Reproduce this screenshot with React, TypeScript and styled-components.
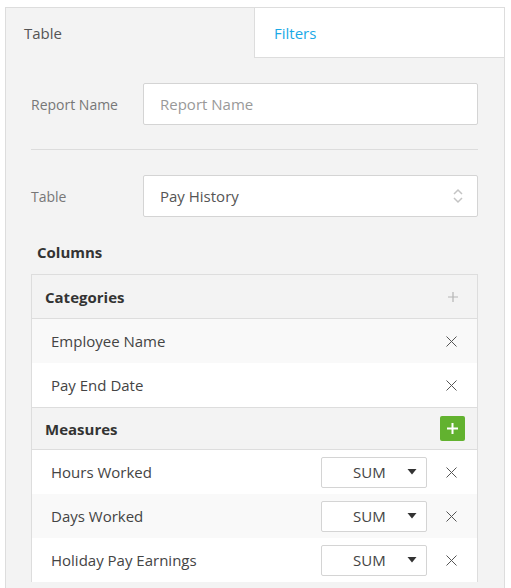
import React from "react";
import styled, { createGlobalStyle } from "styled-components";

const Global = createGlobalStyle`
  html, body { margin: 0; padding: 0; background: #ffffff; }
  body { font-family: "Open Sans", "Noto Sans", sans-serif; font-size: 14px; color: #444; }
  * { box-sizing: border-box; }
`;

const Frame = styled.div`
  margin: 7px 0 0 5px;
  width: 500px;
  height: 581px;
  background: #f3f3f3;
  border: 1px solid #dddddd;
  border-bottom: none;
  overflow: hidden;
`;

const Tabs = styled.div`
  display: flex;
  height: 50px;
`;

const Tab = styled.div<{ $active?: boolean }>`
  flex: 1;
  display: flex;
  align-items: center;
  padding-left: ${(p) => (p.$active ? "18px" : "19px")};
  font-size: 15px;
  color: ${(p) => (p.$active ? "#555" : "#1aa9e6")};
  background: ${(p) => (p.$active ? "transparent" : "#ffffff")};
  border-left: ${(p) => (p.$active ? "none" : "1px solid #dddddd")};
  border-bottom: ${(p) => (p.$active ? "none" : "1px solid #dddddd")};
`;

const Body = styled.div`
  padding: 25px 26px 0 25px;
`;

const FieldRow = styled.div`
  display: flex;
  align-items: center;
`;

const Label = styled.div`
  width: 112px;
  font-size: 14px;
  color: #777;
`;

const TextInput = styled.div`
  flex: 1;
  height: 42px;
  background: #fff;
  border: 1px solid #d4d4d4;
  border-radius: 2px;
  display: flex;
  align-items: center;
  padding-left: 16px;
  font-size: 15px;
  color: #999;
`;

const SelectBox = styled(TextInput)`
  color: #555;
  justify-content: space-between;
  padding-right: 14px;
`;

const Divider = styled.div`
  height: 1px;
  background: #dcdcdc;
  margin: 24px 0 25px;
`;

const SectionTitle = styled.div`
  font-weight: 700;
  font-size: 15px;
  color: #333;
  margin: 25px 0 12px 6px;
`;

const Panel = styled.div`
  border: 1px solid #dddddd;
  border-bottom: none;
  background: #fff;
`;

const PanelHeader = styled.div<{ $top?: boolean }>`
  height: ${(p) => (p.$top ? "44px" : "43px")};
  background: #f3f3f3;
  display: flex;
  align-items: center;
  justify-content: space-between;
  padding: 0 12px 0 13px;
  font-weight: 700;
  font-size: 15px;
  color: #333;
  border-bottom: 1px solid #dddddd;
  ${(p) => (p.$top ? "" : "border-top: 1px solid #dddddd;")}
`;

const Item = styled.div<{ $shade?: boolean }>`
  height: 44px;
  display: flex;
  align-items: center;
  padding: 0 19px 0 19px;
  background: ${(p) => (p.$shade ? "#f9f9f9" : "#ffffff")};
  font-size: 15px;
  color: #444;
`;

const ItemName = styled.div`
  flex: 1;
`;

const Agg = styled.div`
  width: 106px;
  height: 31px;
  border: 1px solid #d4d4d4;
  border-radius: 2px;
  background: #fff;
  display: flex;
  align-items: center;
  justify-content: space-between;
  padding: 0 9px 0 31px;
  margin-right: 17px;
  font-size: 15px;
  color: #444;
`;

const AddGreen = styled.div`
  width: 25px;
  height: 25px;
  border-radius: 2px;
  background: #62b22f;
  display: flex;
  align-items: center;
  justify-content: center;
`;

const IconBox = styled.div<{ $shift?: number }>`
  display: flex;
  align-items: center;
  justify-content: center;
  width: 14px;
  height: 14px;
  margin-right: ${(p) => p.$shift ?? 0}px;
`;

const Close = () => (
  <IconBox>
    <svg width="11" height="11" viewBox="0 0 11 11">
      <path d="M0.5 0.5 L10.5 10.5 M10.5 0.5 L0.5 10.5" stroke="#555" strokeWidth="1" fill="none" />
    </svg>
  </IconBox>
);

const Plus = ({ color, size }: { color: string; size: number }) => (
  <svg width={size} height={size} viewBox={`0 0 ${size} ${size}`}>
    <path
      d={`M${size / 2} 0 V${size} M0 ${size / 2} H${size}`}
      stroke={color}
      strokeWidth={size > 10 ? 2 : 1.2}
      fill="none"
    />
  </svg>
);

const Caret = () => (
  <svg width="10" height="6" viewBox="0 0 10 6">
    <path d="M0.5 0 H9.5 L5 5.5 Z" fill="#333" />
  </svg>
);

const UpDown = () => (
  <svg width="10" height="16" viewBox="0 0 10 16">
    <path d="M1 6 L5 2 L9 6 M1 10 L5 14 L9 10" stroke="#c4c4c4" strokeWidth="1.5" fill="none" />
  </svg>
);

export default function App() {
  return (
    <>
      <Global />
      <Frame>
        <Tabs>
          <Tab $active>Table</Tab>
          <Tab>Filters</Tab>
        </Tabs>
        <Body>
          <FieldRow>
            <Label>Report Name</Label>
            <TextInput>Report Name</TextInput>
          </FieldRow>
          <Divider />
          <FieldRow>
            <Label>Table</Label>
            <SelectBox>
              <span>Pay History</span>
              <UpDown />
            </SelectBox>
          </FieldRow>
          <SectionTitle>Columns</SectionTitle>
          <Panel>
            <PanelHeader $top>
              <span>Categories</span>
              <IconBox $shift={5}>
                <Plus color="#b5b5b5" size={10} />
              </IconBox>
            </PanelHeader>
            <Item $shade>
              <ItemName>Employee Name</ItemName>
              <Close />
            </Item>
            <Item>
              <ItemName>Pay End Date</ItemName>
              <Close />
            </Item>
            <PanelHeader>
              <span>Measures</span>
              <AddGreen>
                <Plus color="#fff" size={11} />
              </AddGreen>
            </PanelHeader>
            <Item>
              <ItemName>Hours Worked</ItemName>
              <Agg>
                <span>SUM</span>
                <Caret />
              </Agg>
              <Close />
            </Item>
            <Item $shade>
              <ItemName>Days Worked</ItemName>
              <Agg>
                <span>SUM</span>
                <Caret />
              </Agg>
              <Close />
            </Item>
            <Item>
              <ItemName>Holiday Pay Earnings</ItemName>
              <Agg>
                <span>SUM</span>
                <Caret />
              </Agg>
              <Close />
            </Item>
          </Panel>
        </Body>
      </Frame>
    </>
  );
}
